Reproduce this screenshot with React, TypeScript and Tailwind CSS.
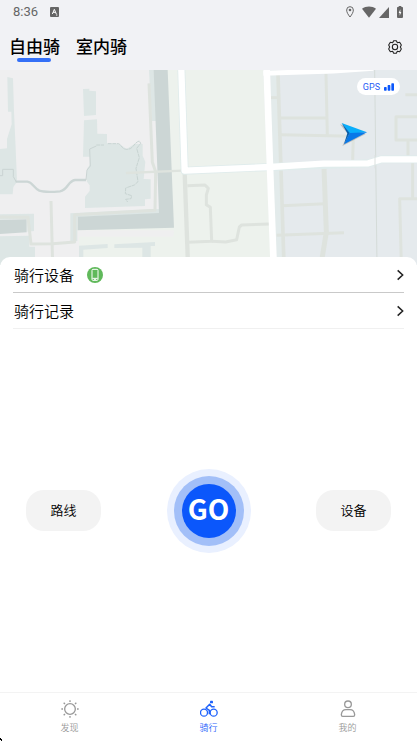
import React, { useState } from "react";

const BLUE = "#0b57fb";

const RideMap: React.FC = () => (
  <svg
    className="block h-full w-full"
    viewBox="0 15 1251 585"
    preserveAspectRatio="xMidYMin slice"
    fill="none"
    aria-label="地图"
  >
    {/* districts */}
    <rect x="0" y="15" width="1251" height="585" fill="#edf2ed" />
    <path d="M0 15H462L478 445L232 455V496H522L520 515H237V600H0Z" fill="#efeff0" />
    <path d="M790 15H1251V600H812Z" fill="#e5eaed" />
    <path d="M812 15H832L852 600H815Z" fill="#e3ebeb" />

    {/* gardens and water */}
    <g fill="#dde6e5">
      <path d="M22 36L39 40L42 140L47 250L51 350L40 366L38 388L0 388V252L21 250V222L35 178L34 140H24Z" />
      <path d="M249 72L268 71V77L288 79V150L252 153Z" />
      <path d="M252 166L291 163L292 206L321 207V236L358 237L380 252L404 236L428 237V272L436 290L431 342L452 343V401L435 403V423L255 429V395L269 378V361L260 349L262 310L269 300V275H249Z" />
      <path d="M447 15H463L468 168H455Z" />
      <path d="M0 448L102 446V498L82 500V462L0 464Z" />
      <path d="M0 514L88 512V545H105V600H0Z" />
      <path d="M211 445L478 432V446L232 456V528H211Z" />
      <path d="M237 542L323 537V549L250 554V600H237Z" />
      <path d="M343 538L465 531V543H452V600H427V548L343 549Z" />
    </g>
    <path d="M461 15H503L522 488L233 496V455L477 444Z" fill="#ccd6d5" />
    <path d="M0 465L80 463V502L0 507Z" fill="#ccd6d5" />

    {/* streams */}
    <path
      d="M47 350H82C98 352 100 368 118 377C130 381 145 382 180 379C205 374 203 348 225 345H258"
      stroke="#ccd6d5"
      strokeWidth="7"
    />
    <path d="M0 332H8V313H40V335L49 351M258 345L261 315L271 303L269 252L289 243" stroke="#cad4d3" strokeWidth="3" />
    <path
      d="M289 240H312M323 236H356C369 244 364 253 382 253C401 252 402 232 418 228L422 235L410 250L418 278L408 310L414 350L403 360L377 369L376 386L395 392L393 401L377 403L383 411"
      stroke="#c8d4d2"
      strokeWidth="3"
      strokeDasharray="12 2"
    />

    {/* lanes */}
    <g stroke="#dee3de" strokeWidth="9" strokeLinejoin="round">
      <path d="M447 55L457 292L467 320L465 436L224 449V531L158 536L93 537L84 457L0 456" />
      <path d="M153 408L158 600" />
      <path d="M378 324L548 317" strokeWidth="7" />
      <path d="M554 324L564 600" strokeWidth="13" />
      <path d="M562 362L615 360L625 370L619 390V419L631 427L635 529L563 532" />
      <path d="M635 529L677 531L710 524L718 486L725 480L808 477" />
      <path d="M812 98H834" />
      <path d="M834 30L852 600" strokeWidth="11" />
      <path d="M978 27L982 212M841 159H980M842 209L1060 214L1058 286" />
      <path d="M972 308L979 501L963 600" strokeWidth="15" />
      <path d="M846 422L974 416M830 511L1032 503" />
      <path d="M1216 89H1251M1251 155H1188V225H1251M1224 225V276M1238 290V401M1251 401H1199L1204 600" />
    </g>
    <path d="M1124 15L1131 600" stroke="#d4dbd8" strokeWidth="3" />

    {/* main roads */}
    <g stroke="#e0ecec" strokeWidth="24" strokeLinejoin="round">
      <path d="M544 15L554 317L810 306L1105 295L1145 283H1251" />
    </g>
    <g stroke="#fff" strokeLinejoin="round">
      <path d="M544 15L554 317L810 306L970 296L1105 295L1145 283H1251" strokeWidth="19" />
      <path d="M800 10L810 306L821 600" strokeWidth="20" />
      <path d="M790 25L1000 18L1120 10" strokeWidth="15" />
    </g>
    <path d="M1125 270V310" stroke="#dce1df" strokeWidth="3" />

    {/* current position */}
    <path d="M1020 178L1097 207L1027 243L1044 208Z" fill="#6b6b6b" opacity=".35" />
    <path d="M1025 174L1101 202L1049 206Z" fill="#09aefb" />
    <path d="M1101 202L1032 238L1049 204Z" fill="#0878e8" />
    <path d="M1025 174L1049 204L1032 238L1042 205Z" fill="#075fae" />
  </svg>
);

const StatusBar: React.FC = () => (
  <div className="flex h-6 items-center justify-between px-[13px] text-[#666]">
    <div className="flex items-center gap-3">
      <span className="font-['Roboto',sans-serif] text-[13px] leading-6 font-normal">8:36</span>
      <svg className="h-[10px] w-[9px]" viewBox="0 0 27 30">
        <rect width="27" height="30" rx="3" fill="#666" />
        <path d="M7 21L13 7L19 21M9 16H17M18 24H22" stroke="#fff" strokeWidth="3" fill="none" />
      </svg>
    </div>
    <div className="flex items-center">
      <svg className="mr-2 h-3 w-2" viewBox="0 0 24 36" fill="none" stroke="#666" strokeWidth="3">
        <path d="M12 33C6 25 2 19 2 12A10 10 0 0 1 22 12C22 19 18 25 12 33Z" />
        <circle cx="12" cy="12" r="4" fill="#666" stroke="none" />
      </svg>
      <svg className="mr-[3px] h-3 w-[14px]" viewBox="0 0 42 36">
        <path d="M21 35L0 8C12-1 30-1 42 8Z" fill="#666" />
      </svg>
      <svg className="mr-[7px] h-[11px] w-[10px]" viewBox="0 0 30 33">
        <path d="M30 0V33H0Z" fill="#666" />
      </svg>
      <svg className="h-3 w-2" viewBox="0 0 24 36">
        <path d="M8 0H16V3H19Q21 3 21 6V33Q21 36 18 36H6Q3 36 3 33V6Q3 3 5 3H8Z" fill="#666" />
        <path d="M13 10L8 21H11V29L16 18H13Z" fill="#fff" />
      </svg>
    </div>
  </div>
);

const GearIcon: React.FC = () => (
  <svg className="h-4 w-4" viewBox="0 0 48 48" fill="none" stroke="#222" strokeWidth="3.2" strokeLinejoin="round">
    <path d="M20 5H28L31 11L38 10L43 18L40 24L43 30L38 38L31 37L28 43H20L17 37L10 38L5 30L8 24L5 18L10 10L17 11Z" />
    <circle cx="24" cy="24" r="8" />
  </svg>
);

const Chevron: React.FC = () => (
  <svg className="h-3 w-2" viewBox="0 0 24 36" fill="none" stroke="#222" strokeWidth="4.5">
    <path d="M5 4L20 18L5 32" />
  </svg>
);

const SunIcon: React.FC = () => (
  <svg className="h-[18px] w-[18px]" viewBox="0 0 54 54" fill="none" stroke="currentColor" strokeWidth="4">
    <circle cx="27" cy="27" r="16" />
    <path d="M27 1V6M27 48V53M1 27H6M48 27H53M8 8L12 12M42 42L46 46M8 46L12 42M42 12L46 8" />
  </svg>
);

const BikeIcon: React.FC = () => (
  <svg className="h-[18px] w-[18px]" viewBox="0 0 54 54" fill="none" stroke="currentColor" strokeWidth="4">
    <circle cx="12" cy="38" r="10.5" />
    <circle cx="41" cy="38" r="10.5" />
    <rect x="30" y="2" width="9" height="8" rx="2" fill="currentColor" stroke="none" />
    <path d="M44 20H35L29 13L18 24L28 31V43" strokeWidth="4.5" strokeLinejoin="round" />
  </svg>
);

const UserIcon: React.FC = () => (
  <svg className="h-[18px] w-[18px]" viewBox="0 0 54 54" fill="none" stroke="currentColor" strokeWidth="4">
    <circle cx="27" cy="13" r="10" />
    <path d="M11 49C8 49 7 47 7 44C8 34 14 29 21 29H33C40 29 46 34 47 44C47 47 46 49 43 49Z" />
  </svg>
);

const PhoneBadge: React.FC = () => (
  <svg className="ml-[13px] h-4 w-4" viewBox="0 0 48 48">
    <circle cx="24" cy="24" r="24" fill="#60b95b" />
    <rect x="15" y="7" width="18" height="33" rx="3" fill="none" stroke="#fff" strokeWidth="3" />
    <path d="M16 34H32M21 37H27" stroke="#fff" strokeWidth="3" />
  </svg>
);

const rideTabs = ["自由骑", "室内骑"];

const navItems = [
  { label: "发现", icon: <SunIcon /> },
  { label: "骑行", icon: <BikeIcon /> },
  { label: "我的", icon: <UserIcon /> },
];

const App: React.FC = () => {
  const [tab, setTab] = useState(0);
  const [page, setPage] = useState(1);

  return (
    <div className="relative flex min-h-screen flex-col bg-white font-['Noto_Sans_CJK_SC',sans-serif] font-[350] text-black">
      <header className="bg-[#f1f2f5]">
        <StatusBar />
        <div className="flex h-[46px] items-center justify-between pr-[14px] pl-[9px]">
          <div className="flex gap-4">
            {rideTabs.map((name, i) => (
              <button
                key={name}
                type="button"
                onClick={() => setTab(i)}
                className="relative pb-0.5 text-[17px] leading-7 font-medium"
              >
                {name}
                {tab === i && (
                  <span className="absolute bottom-0 left-2 h-1 w-[34px] rounded-full bg-[#3470f7]" />
                )}
              </button>
            ))}
          </div>
          <button type="button" aria-label="设置">
            <GearIcon />
          </button>
        </div>
      </header>

      <div className="relative h-[195px]">
        <RideMap />
        <div className="absolute top-2 right-[17px] flex h-[17px] items-center gap-1 rounded-full bg-white px-1.5 text-[#1f5cf5]">
          <span className="font-['Roboto',sans-serif] text-[9px] leading-4 font-normal">GPS</span>
          <svg className="h-2 w-[10px]" viewBox="0 0 30 24" fill={BLUE}>
            <rect x="0" y="12" width="8" height="11" rx="2" />
            <rect x="11" y="6" width="8" height="17" rx="2" />
            <rect x="22" y="1" width="8" height="22" rx="2" />
          </svg>
        </div>
      </div>

      <main className="relative -mt-2 flex flex-1 flex-col rounded-t-[10px] bg-white">
        <div className="px-[13px] text-[15px] leading-[35px]">
          <button type="button" className="flex w-full items-center border-b border-[#c9c9c9] pl-px">
            <span>骑行设备</span>
            <PhoneBadge />
            <span className="ml-auto">
              <Chevron />
            </span>
          </button>
          <button type="button" className="flex w-full items-center justify-between border-b border-[#f0f0f0] pl-px">
            <span>骑行记录</span>
            <Chevron />
          </button>
        </div>

        <div className="flex flex-1 items-center justify-between px-[26px]">
          <button type="button" className="h-[41px] w-[75px] rounded-[18px] bg-[#f3f3f3] pb-0.5 text-[13px]">
            路线
          </button>
          <button type="button" className="rounded-full bg-[#e9f0ff] p-[7px]">
            <span className="block rounded-full bg-[#a2bff8] p-2">
              <span className="flex h-[54px] w-[54px] items-center justify-center rounded-full bg-[#0b57fb] pb-1.5 text-[28px] leading-none font-bold text-white">
                GO
              </span>
            </span>
          </button>
          <button type="button" className="h-[41px] w-[75px] rounded-[18px] bg-[#f3f3f3] pb-0.5 text-[13px]">
            设备
          </button>
        </div>
      </main>

      <nav className="grid h-[49px] grid-cols-3 border-t border-[#f3f3f3]">
        {navItems.map((item, i) => (
          <button
            key={item.label}
            type="button"
            onClick={() => setPage(i)}
            className={`flex flex-col items-center pt-[7px] text-[9px] leading-5 ${
              page === i ? "text-[#1f62fb]" : "text-[#999]"
            }`}
          >
            {item.icon}
            {item.label}
          </button>
        ))}
      </nav>
      <svg className="absolute bottom-0 left-0 h-[3px] w-[2px]" viewBox="0 0 2 3">
        <path d="M0 0H1V1H2V3H1V2H0Z" fill="#000" />
      </svg>
    </div>
  );
};

export default App;
